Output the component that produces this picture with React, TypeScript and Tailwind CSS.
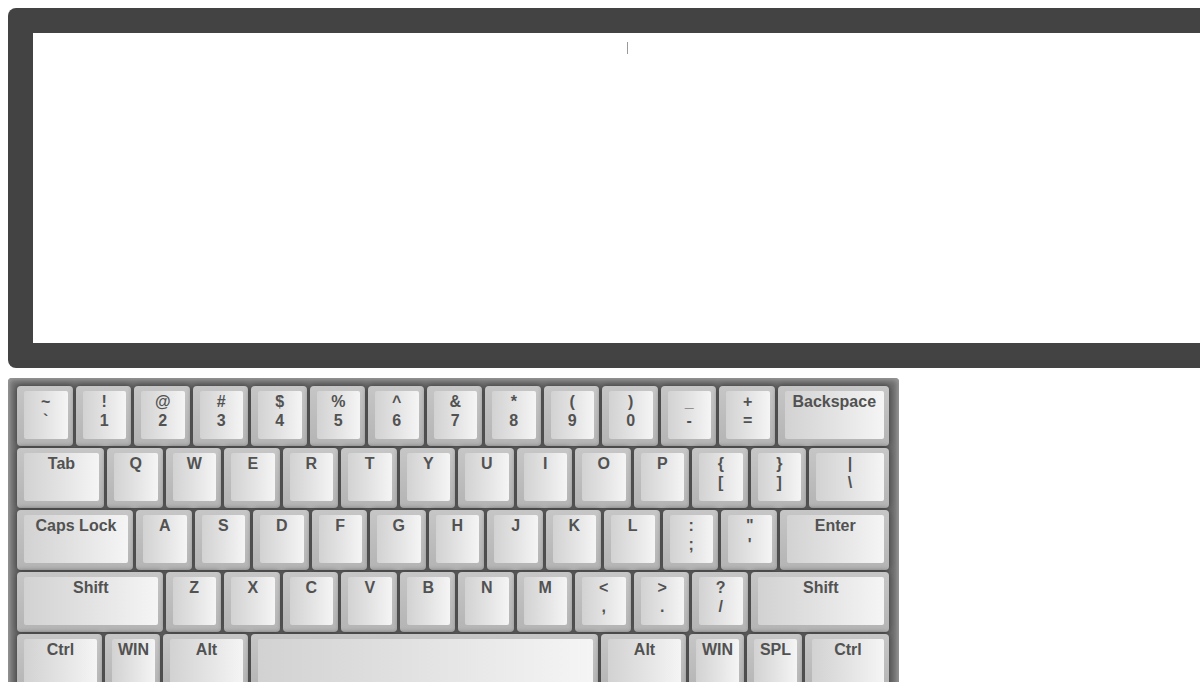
import React from "react";

type KeyDef = { top?: string; bottom?: string; label?: string; w: number };

const U = 55.5;

const ROWS: KeyDef[][] = [
  [
    { top: "~", bottom: "`", w: U },
    { top: "!", bottom: "1", w: U },
    { top: "@", bottom: "2", w: U },
    { top: "#", bottom: "3", w: U },
    { top: "$", bottom: "4", w: U },
    { top: "%", bottom: "5", w: U },
    { top: "^", bottom: "6", w: U },
    { top: "&", bottom: "7", w: U },
    { top: "*", bottom: "8", w: U },
    { top: "(", bottom: "9", w: U },
    { top: ")", bottom: "0", w: U },
    { top: "_", bottom: "-", w: U },
    { top: "+", bottom: "=", w: U },
    { label: "Backspace", w: 111.5 },
  ],
  [
    { label: "Tab", w: 87 },
    { label: "Q", w: U },
    { label: "W", w: U },
    { label: "E", w: U },
    { label: "R", w: U },
    { label: "T", w: U },
    { label: "Y", w: U },
    { label: "U", w: U },
    { label: "I", w: U },
    { label: "O", w: U },
    { label: "P", w: U },
    { top: "{", bottom: "[", w: U },
    { top: "}", bottom: "]", w: U },
    { top: "|", bottom: "\\", w: 80 },
  ],
  [
    { label: "Caps Lock", w: 116 },
    { label: "A", w: U },
    { label: "S", w: U },
    { label: "D", w: U },
    { label: "F", w: U },
    { label: "G", w: U },
    { label: "H", w: U },
    { label: "J", w: U },
    { label: "K", w: U },
    { label: "L", w: U },
    { top: ":", bottom: ";", w: U },
    { top: '"', bottom: "'", w: U },
    { label: "Enter", w: 109.5 },
  ],
  [
    { label: "Shift", w: 145.5 },
    { label: "Z", w: U },
    { label: "X", w: U },
    { label: "C", w: U },
    { label: "V", w: U },
    { label: "B", w: U },
    { label: "N", w: U },
    { label: "M", w: U },
    { top: "<", bottom: ",", w: U },
    { top: ">", bottom: ".", w: U },
    { top: "?", bottom: "/", w: U },
    { label: "Shift", w: 138.5 },
  ],
  [
    { label: "Ctrl", w: 85 },
    { label: "WIN", w: 55 },
    { label: "Alt", w: 85 },
    { w: 347 },
    { label: "Alt", w: 85 },
    { label: "WIN", w: 55 },
    { label: "SPL", w: 55 },
    { label: "Ctrl", w: 84 },
  ],
];

function Key({ k }: { k: KeyDef }) {
  return (
    <div
      className="flex-none h-[60px] rounded-[4px] bg-linear-to-b from-[#c6c6c6] to-[#b4b4b4] pl-[7px] pr-[5px] pt-[5px] pb-[7px] shadow-[0_0_5px_1px_rgba(40,40,40,0.6)]"
      style={{ width: k.w }}
    >
      <div className="h-full rounded-[2px] bg-linear-to-r from-[#d2d2d2] via-[#e3e3e3] to-[#f5f5f5] pt-[1px] text-center font-['Liberation_Sans',Arial,sans-serif] text-[16px] font-bold leading-[19px] text-[#525252]">
        {k.label !== undefined ? (
          <div>{k.label}</div>
        ) : k.top !== undefined ? (
          <>
            <div>{k.top}</div>
            <div>{k.bottom}</div>
          </>
        ) : null}
      </div>
    </div>
  );
}

export default function App() {
  return (
    <div className="w-[1200px] h-[682px] overflow-hidden bg-white">
      <div className="pt-[8px] pl-[8px]">
        {/* screen */}
        <div className="w-[1238px] h-[360px] rounded-[8px] bg-[#434343] p-[25px]">
          <div className="h-full bg-white flex justify-center pt-[9px]">
            <div className="w-[1px] h-[12px] bg-[#9a9a9a]" />
          </div>
        </div>

        {/* keyboard */}
        <div className="mt-[10px] w-[891px] rounded-[4px] bg-[#707070] pt-[8px] pl-[9px] pr-[10px] pb-[10px] shadow-[inset_0_0_5px_2px_#9c9c9c] flex flex-col gap-[2px]">
          {ROWS.map((row, i) => (
            <div key={i} className="flex gap-[3px]">
              {row.map((k, j) => (
                <Key key={j} k={k} />
              ))}
            </div>
          ))}
        </div>
      </div>
    </div>
  );
}
